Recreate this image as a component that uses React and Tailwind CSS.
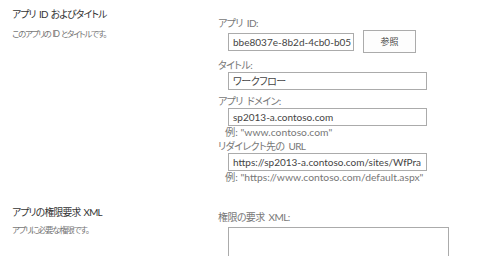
export default function App() {
  const font = { fontFamily: '"Lato", "Noto Sans CJK JP", sans-serif' };
  const jp = "[font-feature-settings:'palt']";
  const head = "text-[9.8px] leading-[14px] tracking-[-0.8px] [word-spacing:1.5px] text-[#333]";
  const desc = "text-[8.5px] leading-[14px] tracking-[-1.3px] [word-spacing:1px] text-[#777]";
  const label = "text-[10px] leading-[14px] tracking-[-0.6px] [word-spacing:2px] text-[#777]";
  const input = "h-[18px] border border-[#ababab] pl-[4px] text-[10px] leading-[16px] text-[#444] overflow-hidden whitespace-nowrap";
  const example = "text-[10.3px] leading-[12px] text-[#777]";
  return (
    <div className={`w-[500px] h-[256px] overflow-hidden bg-white text-[#444] ${jp}`} style={font}>
      <div className="flex h-[196px]">
        <div className="w-[218px] pl-3 pt-[7px] shrink-0">
          <div className={head}>アプリ ID およびタイトル</div>
          <div className={`mt-[6px] ${desc}`}>このアプリの ID とタイトルです。</div>
        </div>
        <div className="pt-[16px] flex flex-col">
          <div className={label}>アプリ ID:</div>
          <div className="flex items-center h-[23px] pl-[10px]">
            <div className={`w-[126px] ${input}`}>bbe8037e-8b2d-4cb0-b05</div>
            <button className="ml-[9px] w-[53px] h-[23px] border border-[#ababab] bg-[#fdfdfd] text-[9px] text-[#444]">参照</button>
          </div>
          <div className={`mt-[5px] ${label}`}>タイトル:</div>
          <div className="pl-[10px]">
            <div className={`w-[199px] ${input} tracking-[-0.5px]`}>ワークフロー</div>
          </div>
          <div className={`mt-[4px] ${label}`}>アプリ ドメイン:</div>
          <div className="pl-[7px]">
            <div className={`ml-[3px] w-[199px] ${input}`}>sp2013-a.contoso.com</div>
            <div className={example}>例: "www.contoso.com"</div>
          </div>
          <div className={`mt-[1px] ${label}`}>リダイレクト先の URL</div>
          <div className="pl-[7px]">
            <div className={`ml-[3px] w-[199px] ${input}`}>https://sp2013-a.contoso.com/sites/WfPra</div>
            <div className={example}>例: "https://www.contoso.com/default.aspx"</div>
          </div>
        </div>
      </div>
      <div className="flex">
        <div className="w-[218px] pl-3 pt-[9px] shrink-0">
          <div className={head}>アプリの権限要求 XML</div>
          <div className={`mt-[4px] ${desc}`}>アプリに必要な権限です。</div>
        </div>
        <div className="pt-[14px]">
          <div className={label}>権限の要求 XML:</div>
          <div className="pl-[10px] pt-[3px]">
            <div className="w-[221px] h-[60px] border border-[#ababab]"></div>
          </div>
        </div>
      </div>
    </div>
  );
}
